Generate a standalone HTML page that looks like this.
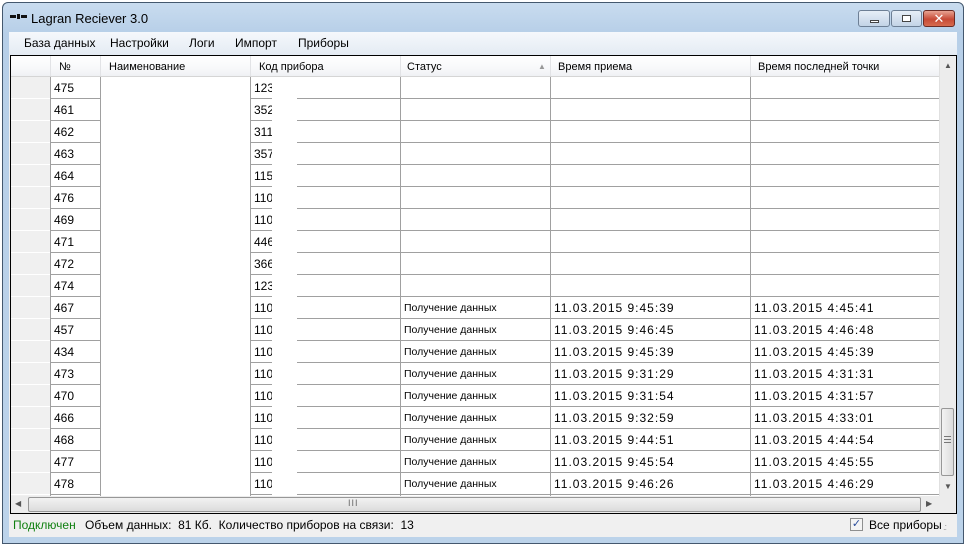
<!DOCTYPE html>
<html><head><meta charset="utf-8">
<style>
*{margin:0;padding:0;box-sizing:border-box}
body{width:966px;height:546px;overflow:hidden;background:#fff;font-family:"Liberation Sans","DejaVu Sans",sans-serif;position:relative}
.a{position:absolute}
.frame{left:2px;top:2px;width:962px;height:542px;background:linear-gradient(#c9dcef,#b7cfe8 30px,#bcd3ea);border:1px solid #44586e;border-radius:6px 6px 0 0}
.t{font-size:12px;color:#000;white-space:nowrap}
.hl{background:#a0a0a0;height:1px}
.vl{background:#a0a0a0;width:1px}
</style></head><body>
<div class="a" style="left:0;top:543px;width:966px;height:3px;background:#fff"></div>
<div class="a frame"></div>
<div class="a" style="left:10px;top:14px;width:16px;height:5px;font-size:0">
<div class="a" style="left:0;top:1px;width:6px;height:3px;background:#111"></div>
<div class="a" style="left:7px;top:0;width:3px;height:5px;background:#111"></div>
<div class="a" style="left:11px;top:1px;width:6px;height:3px;background:#111"></div></div>
<div class="a" style="left:31px;top:11px;font-size:13px;color:#000">Lagran Reciever 3.0</div>
<div class="a" style="left:858px;top:10px;width:32px;height:17px;border:1px solid #6d7f95;border-radius:3px;background:linear-gradient(#e6eef7,#c3d3e6)"><div class="a" style="left:11px;top:9px;width:9px;height:3px;background:#fff;border:1px solid #444"></div></div>
<div class="a" style="left:891px;top:10px;width:31px;height:17px;border:1px solid #6d7f95;border-radius:3px;background:linear-gradient(#e6eef7,#c3d3e6)"><div class="a" style="left:10px;top:4px;width:9px;height:7px;background:#fff;border:1px solid #444"></div></div>
<div class="a" style="left:923px;top:10px;width:32px;height:17px;border:1px solid #6b2b24;border-radius:3px;background:linear-gradient(#e8a392,#c74a36 55%,#d76a4e);color:#fff;font-size:13px;font-weight:bold;text-align:center;line-height:15px">✕</div>
<div class="a" style="left:9px;top:32px;width:948px;height:505px;background:#f0f0f0"></div>
<div class="a" style="left:9px;top:32px;width:948px;height:23px;background:linear-gradient(#f5f8fc,#e4ebf3)"></div>
<div class="a t" style="left:24px;top:36px">База данных</div>
<div class="a t" style="left:110px;top:36px">Настройки</div>
<div class="a t" style="left:189px;top:36px">Логи</div>
<div class="a t" style="left:235px;top:36px">Импорт</div>
<div class="a t" style="left:298px;top:36px">Приборы</div>
<div class="a" style="left:10px;top:55px;width:947px;height:459px;border:1px solid #000;background:#fff;overflow:hidden">
<div id="g" class="a" style="left:0;top:0;width:945px;height:457px"></div>
</div>
<div class="a t" style="left:13px;top:518px;color:#108010">Подключен</div>
<div class="a t" style="left:85px;top:518px">Объем данных:&nbsp; 81 Кб.&nbsp; Количество приборов на связи:&nbsp; 13</div>
<div class="a" style="left:850px;top:518px;width:13px;height:13px;border:1px solid #8e8f8f;background:#f4f4f4;font-size:11px;line-height:11px;text-align:center;color:#2a4d9b">✓</div>
<div class="a t" style="left:869px;top:518px">Все приборы</div>
<div class="a" style="left:943px;top:522px;font-size:9px;color:#999;letter-spacing:-1px">.:</div>
<script>
var g=document.getElementById('g'),h='';
function add(s){h+=s}
add('<div class="a" style="left:0;top:0;width:928px;height:21px;background:linear-gradient(#fff,#f7f8fa 60%,#eef0f3)"></div>');
add('<div class="a" style="left:0;top:21px;width:40px;height:419px;background:#f0f0f0"></div>');
var cols=[40,90,240,390,540,740,928];
var hd=[['№',48],['Наименование',98],['Код прибора',248],['Статус',396],['Время приема',547],['Время последней точки',747]];
hd.forEach(function(c){add('<div class="a t" style="left:'+c[1]+'px;top:5px;font-size:11px">'+c[0]+'</div>')});
add('<div class="a" style="left:527px;top:6px;font-size:8px;color:#999">▲</div>');
cols.forEach(function(x,i){if(i<6)add('<div class="a" style="left:'+(x-1)+'px;top:0;width:1px;height:20px;background:#e2e3e6"></div>')});
add('<div class="a" style="left:0;top:20px;width:928px;height:1px;background:#d5d5d5"></div>');
var rows=[['475','123'],['461','352'],['462','311'],['463','357'],['464','115'],['476','110'],['469','110'],['471','446'],['472','366'],['474','123'],
['467','110','11.03.2015 9:45:39','11.03.2015 4:45:41'],['457','110','11.03.2015 9:46:45','11.03.2015 4:46:48'],['434','110','11.03.2015 9:45:39','11.03.2015 4:45:39'],
['473','110','11.03.2015 9:31:29','11.03.2015 4:31:31'],['470','110','11.03.2015 9:31:54','11.03.2015 4:31:57'],['466','110','11.03.2015 9:32:59','11.03.2015 4:33:01'],
['468','110','11.03.2015 9:44:51','11.03.2015 4:44:54'],['477','110','11.03.2015 9:45:54','11.03.2015 4:45:55'],['478','110','11.03.2015 9:46:26','11.03.2015 4:46:29']];
rows.forEach(function(r,i){
 var y=21+22*i;
 add('<div class="a t" style="left:43px;top:'+(y+4)+'px">'+r[0]+'</div>');
 add('<div class="a t" style="left:243px;top:'+(y+4)+'px;width:18px;overflow:hidden">'+r[1]+'</div>');
 if(r[2]){add('<div class="a t" style="left:393px;top:'+(y+5)+'px;font-size:10.5px">Получение данных</div>');
 add('<div class="a t" style="left:543px;top:'+(y+4)+'px;letter-spacing:1px">'+r[2]+'</div>');
 add('<div class="a t" style="left:743px;top:'+(y+4)+'px;letter-spacing:1px">'+r[3]+'</div>');}
 var ly=y+21;
 add('<div class="a" style="left:0;top:'+ly+'px;width:39px;height:1px;background:#fff"></div>');
 add('<div class="a hl" style="left:40px;top:'+ly+'px;width:50px"></div>');
 add('<div class="a hl" style="left:240px;top:'+ly+'px;width:21px"></div>');
 add('<div class="a hl" style="left:286px;top:'+ly+'px;width:642px"></div>');
});
[40,90,240,390,540,740].forEach(function(x){add('<div class="a vl" style="left:'+(x-1)+'px;top:21px;height:419px"></div>')});
add('<div class="a" style="left:928px;top:0;width:17px;height:440px;background:#ececec;border-left:1px solid #e0e0e0"></div>');
add('<div class="a" style="left:933px;top:5px;font-size:8px;color:#555">▲</div>');
add('<div class="a" style="left:933px;top:426px;font-size:8px;color:#555">▼</div>');
add('<div class="a" style="left:930px;top:352px;width:13px;height:68px;border:1px solid #979797;border-radius:2px;background:linear-gradient(90deg,#f2f2f2,#dcdcdc)"></div>');
add('<div class="a" style="left:933px;top:380px;width:7px;height:7px;border-top:1px solid #777;border-bottom:1px solid #777"><div style="margin-top:2px;height:1px;background:#777"></div></div>');
add('<div class="a" style="left:0;top:440px;width:945px;height:17px;background:#ececec"></div>');
add('<div class="a" style="left:4px;top:443px;font-size:8px;color:#555">◀</div>');
add('<div class="a" style="left:915px;top:443px;font-size:8px;color:#555">▶</div>');
add('<div class="a" style="left:17px;top:441px;width:893px;height:15px;border:1px solid #979797;border-radius:2px;background:linear-gradient(#f2f2f2,#dcdcdc)"></div>');
add('<div class="a" style="left:337px;top:442px;font-size:9px;color:#666;letter-spacing:1px">III</div>');
g.innerHTML=h;
</script>
</body></html>
